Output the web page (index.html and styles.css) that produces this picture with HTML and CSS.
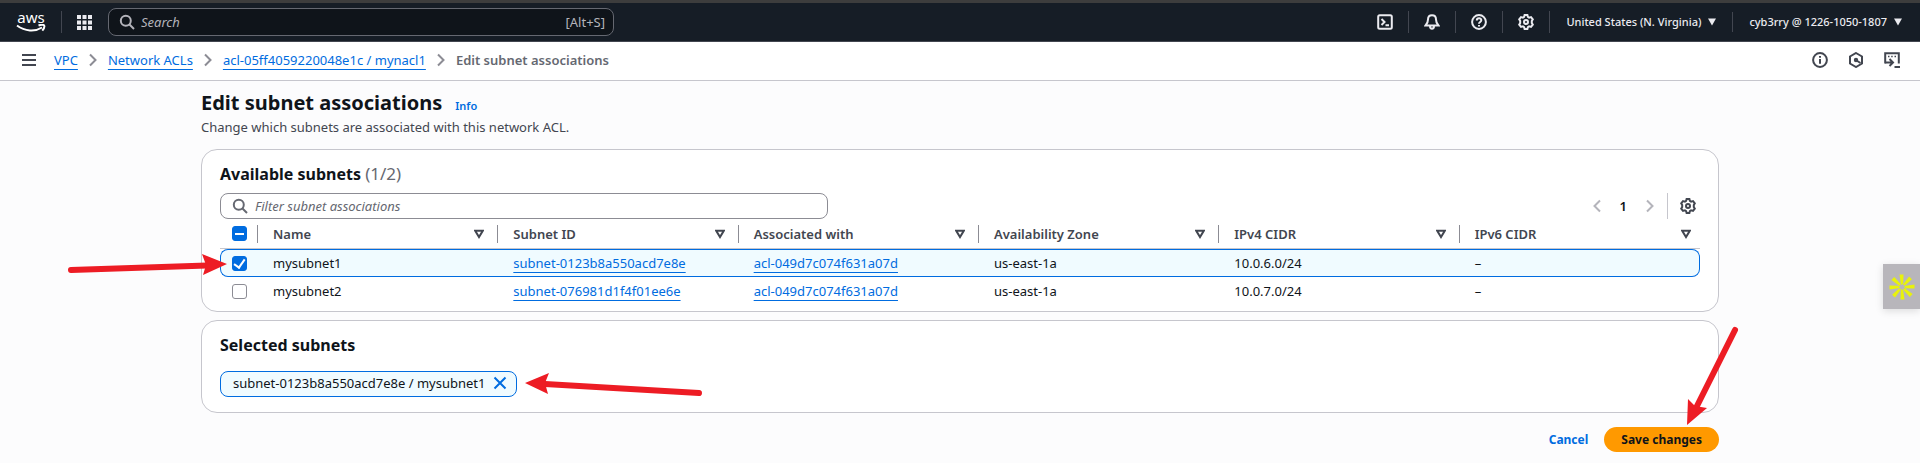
FILE: index.html
```html
<!DOCTYPE html>
<html lang="en">
<head>
<meta charset="utf-8">
<meta name="viewport" content="width=device-width, initial-scale=1">
<title>Edit subnet associations</title>
<link rel="stylesheet" href="styles.css">
</head>
<body>
<svg class="defs" aria-hidden="true">
  <symbol id="search" viewBox="0 0 16 16"><circle cx="6.8" cy="6.8" r="5"/><path d="M10.5 10.5 15 15"/></symbol>
  <symbol id="gear" viewBox="0 0 16 16"><path d="M6.6 1h2.8l.5 1.9 1.2.7 1.9-.5 1.8 2.2-1 1.8v1.8l1 1.8-1.8 2.2-1.9-.5-1.2.7L9.400 15H6.600l-.5-1.900-1.200-.7-1.900.5-1.800-2.200 1-1.800V7.100l-1-1.800L3 3.100l1.900.5 1.200-.7z"/><circle cx="8" cy="8" r="2"/></symbol>
  <symbol id="chevron" viewBox="0 0 16 16"><path d="m5 2.500 5.500 5.500L5 13.500"/></symbol>
  <symbol id="sort" viewBox="0 0 10 10"><path d="M1.200 1.800h7.600L5 8z"/></symbol>
  <symbol id="caret" viewBox="0 0 8 8"><path d="M0 .5h8L4 7.500z"/></symbol>
</svg>

<header class="topbar">
  <a class="logo" href="#" aria-label="AWS home"><span class="logo-text">aws</span>
    <svg class="smile" viewBox="0 0 30 9"><path d="M1 1.500c8 6 18 6.500 25 2"/><path d="M22.500 1.500c2-.8 4.500-1 5.500-.3.700 1-.3 3.800-1.700 5.500"/></svg>
  </a>
  <button class="apps" aria-label="Services">
    <svg viewBox="0 0 15 15"><path d="M0 0h4v4H0zM5.500 0h4v4h-4zM11 0h4v4h-4zM0 5.500h4v4H0zM5.500 5.500h4v4h-4zM11 5.500h4v4h-4zM0 11h4v4H0zM5.500 11h4v4h-4zM11 11h4v4h-4z"/></svg>
  </button>
  <label class="search">
    <svg class="icon"><use href="#search"/></svg>
    <input type="search" placeholder="Search" aria-label="Search">
    <span class="hint">[Alt+S]</span>
  </label>
  <nav class="tools" aria-label="Tools">
    <button class="tool" aria-label="CloudShell"><svg class="icon" viewBox="0 0 16 16"><rect x="1.200" y="1.200" width="13.600" height="13.600" rx="1.500"/><path d="m4.500 5 3 3-3 3M8.500 11.300h3.500"/></svg></button>
    <button class="tool" aria-label="Notifications"><svg class="icon" viewBox="0 0 16 16"><path d="M8 1.200C5.300 1.200 4 3 4 5.500c0 3-1 4-2.500 6h13C13 9.500 12 8.500 12 5.500c0-2.500-1.300-4.300-4-4.300zM6 12c0 3.700 4 3.700 4 0"/></svg></button>
    <button class="tool" aria-label="Support"><svg class="icon" viewBox="0 0 16 16"><circle cx="8" cy="8" r="6.900"/><path d="M5.800 6.500C5.800 3.500 10.300 3.600 10.300 6.300 10.300 8 8 8 8 9.800M8 11v1.600"/></svg></button>
    <button class="tool" aria-label="Settings"><svg class="icon"><use href="#gear"/></svg></button>
    <button class="menu region">United States (N. Virginia) <svg class="caret"><use href="#caret"/></svg></button>
    <button class="menu account">cyb3rry @ 1226-1050-1807 <svg class="caret"><use href="#caret"/></svg></button>
  </nav>
</header>

<div class="crumbbar">
  <button class="burger" aria-label="Open navigation"><svg viewBox="0 0 14 12"><path d="M0 1h14M0 6h14M0 11h14"/></svg></button>
  <nav class="crumbs" aria-label="Breadcrumb">
    <a class="link" href="#">VPC</a>
    <svg class="icon sep"><use href="#chevron"/></svg>
    <a class="link" href="#">Network ACLs</a>
    <svg class="icon sep"><use href="#chevron"/></svg>
    <a class="link" href="#">acl-05ff4059220048e1c / mynacl1</a>
    <svg class="icon sep"><use href="#chevron"/></svg>
    <span class="here">Edit subnet associations</span>
  </nav>
  <div class="panels">
    <button aria-label="Info"><svg class="icon" viewBox="0 0 16 16"><circle cx="8" cy="8" r="6.900"/><path d="M8 7v4.800M8 4v1.800"/></svg></button>
    <button aria-label="Resources"><svg class="icon" viewBox="0 0 16 16"><path d="m8 1 6 3.500v7L8 15l-6-3.500v-7z"/><circle cx="8" cy="8" r="1.200" fill="currentColor"/><path d="m8.500 8.500 4 2.500"/></svg></button>
    <button aria-label="Console"><svg class="icon" viewBox="0 0 16 16"><path d="M1.200 11.500V1.200h13.600V11.500"/><path stroke-width="1.500" d="M4 4.500h1.500M7.200 4.500h1.500M10.500 4.500H12"/><path d="M1.200 10.500h7M5.500 7l3.500 3.500L5.500 14M10.500 15h5.500"/></svg></button>
  </div>
</div>

<main class="page">
  <div class="heading">
    <h1>Edit subnet associations</h1>
    <a class="info" href="#">Info</a>
  </div>
  <p class="intro">Change which subnets are associated with this network ACL.</p>

  <section class="card">
    <h2>Available subnets <span class="count">(1/2)</span></h2>
    <div class="toolbar">
      <label class="filter">
        <svg class="icon"><use href="#search"/></svg>
        <input type="search" placeholder="Filter subnet associations" aria-label="Filter subnet associations">
      </label>
      <div class="pager">
        <button aria-label="Previous page" disabled><svg class="icon prev"><use href="#chevron"/></svg></button>
        <button class="current">1</button>
        <button aria-label="Next page" disabled><svg class="icon"><use href="#chevron"/></svg></button>
        <button class="prefs" aria-label="Preferences"><svg class="icon"><use href="#gear"/></svg></button>
      </div>
    </div>
    <table class="grid">
      <thead>
        <tr>
          <th class="pick"><input class="box mixed" type="checkbox" aria-label="Select all"></th>
          <th><div class="head">Name <svg class="sort"><use href="#sort"/></svg></div></th>
          <th><div class="head">Subnet ID <svg class="sort"><use href="#sort"/></svg></div></th>
          <th><div class="head">Associated with <svg class="sort"><use href="#sort"/></svg></div></th>
          <th><div class="head">Availability Zone <svg class="sort"><use href="#sort"/></svg></div></th>
          <th><div class="head">IPv4 CIDR <svg class="sort"><use href="#sort"/></svg></div></th>
          <th><div class="head last">IPv6 CIDR <svg class="sort"><use href="#sort"/></svg></div></th>
        </tr>
      </thead>
      <tbody>
        <tr class="selected">
          <td class="pick"><input class="box" type="checkbox" aria-label="mysubnet1" checked>
            <svg class="arrow arrow-row" viewBox="0 0 160 24"><path class="shaft" d="M4 18 140 13.500"/><path d="M160 12 135 2l4 11-3 10z"/></svg></td>
          <td>mysubnet1</td>
          <td><a class="link" href="#">subnet-0123b8a550acd7e8e</a></td>
          <td><a class="link" href="#">acl-049d7c074f631a07d</a></td>
          <td>us-east-1a</td>
          <td>10.0.6.0/24</td>
          <td>–</td>
        </tr>
        <tr>
          <td class="pick"><input class="box" type="checkbox" aria-label="mysubnet2"></td>
          <td>mysubnet2</td>
          <td><a class="link" href="#">subnet-076981d1f4f01ee6e</a></td>
          <td><a class="link" href="#">acl-049d7c074f631a07d</a></td>
          <td>us-east-1a</td>
          <td>10.0.7.0/24</td>
          <td>–</td>
        </tr>
      </tbody>
    </table>
  </section>

  <section class="card chosen">
    <h2>Selected subnets</h2>
    <div class="chip">subnet-0123b8a550acd7e8e / mysubnet1
      <button aria-label="Remove mysubnet1"><svg class="icon" viewBox="0 0 16 16"><path d="m2.500 2.500 11 11M13.500 2.500l-11 11"/></svg></button>
      <svg class="arrow arrow-chip" viewBox="0 0 178 26"><path class="shaft" d="M20 11 174 20"/><path d="M0 10 24 0l-4 10 3 11z"/></svg>
    </div>
  </section>

  <div class="actions">
    <button class="cancel">Cancel</button>
    <button class="save">Save changes
      <svg class="arrow arrow-save" viewBox="0 0 52 100"><path class="shaft" d="M48 4 9 82"/><path d="m0 99 1-26 7 7 12 2z"/></svg>
    </button>
  </div>
</main>

<button class="widget" aria-label="Open assistant">
  <svg viewBox="-13 -13 26 26"><g id="ray"><path d="M-2.500-12.500h4L1.200-3.500-1-2z"/></g><use href="#ray" transform="rotate(45)"/><use href="#ray" transform="rotate(90)"/><use href="#ray" transform="rotate(135)"/><use href="#ray" transform="rotate(180)"/><use href="#ray" transform="rotate(225)"/><use href="#ray" transform="rotate(270)"/><use href="#ray" transform="rotate(315)"/></svg>
</button>
</body>
</html>
```
FILE: styles.css
```css
* { box-sizing: border-box; }

body {
  margin: 0;
  background: #fcfcfd;
  color: #0f141a;
  font: 13px/20px "Noto Sans", "Open Sans", sans-serif;
}

button, input { font: inherit; color: inherit; }

button {
  display: flex;
  align-items: center;
  padding: 0;
  border: 0;
  background: none;
  cursor: pointer;
}

.defs { position: absolute; width: 0; height: 0; }

.icon {
  flex: none;
  width: 16px;
  height: 16px;
  fill: none;
  stroke: currentColor;
  stroke-width: 2;
}

.link {
  color: #006ce0;
  text-decoration: underline;
  text-underline-offset: 4px;
}

/* Top bar */
.topbar {
  display: flex;
  align-items: center;
  height: 42px;
  padding: 3px 18px 0 16px;
  border-bottom: 1px solid #424650;
  background: linear-gradient(#3d3d3d 3px, #161d26 3px);
  color: #ebebf0;
}

.logo {
  display: flex;
  flex-direction: column;
  align-items: center;
  width: 30px;
  color: #fff;
  text-decoration: none;
}

.logo-text { font-size: 15px; line-height: 13px; }

.smile {
  width: 30px;
  height: 9px;
  fill: none;
  stroke: currentColor;
  stroke-width: 2;
}

.apps {
  height: 22px;
  margin-left: 15px;
  padding: 0 16px 0 15px;
  border-left: 1px solid #424650;
}

.apps svg { width: 15px; height: 15px; fill: currentColor; }

.search, .filter {
  display: flex;
  align-items: center;
  border-radius: 8px;
}

.search {
  gap: 6px;
  width: 506px;
  height: 28px;
  padding: 0 8px 0 10px;
  border: 1px solid #656871;
  background: #0f141a;
  color: #b4b4bb;
}

.search input, .filter input {
  flex: 1;
  min-width: 0;
  padding: 0;
  border: 0;
  outline: 0;
  background: none;
}

input::placeholder { color: inherit; font-style: italic; opacity: 1; }

.tools { display: flex; align-items: center; margin-left: auto; }

.tool {
  justify-content: center;
  width: 47px;
  height: 22px;
  border-right: 1px solid #424650;
}

.menu { gap: 7px; height: 20px; font-size: 11px; font-weight: 500; }
.region { padding: 0 16px; border-right: 1px solid #424650; }
.account { padding-left: 16px; }
.caret { width: 8px; height: 8px; fill: currentColor; }

/* Breadcrumb bar */
.crumbbar {
  display: flex;
  align-items: center;
  height: 39px;
  padding: 0 20px 2px 22px;
  border-bottom: 1px solid #c6c6cd;
  background: #fff;
  color: #424650;
}

.burger svg { width: 14px; height: 12px; stroke: currentColor; stroke-width: 2; }
.crumbs { display: flex; align-items: center; gap: 7px; margin-left: 18px; }
.sep { color: #8c8c94; }
.here { color: #656871; font-weight: 600; }
.panels { display: flex; gap: 20px; margin-left: auto; }

/* Page */
.page {
  max-width: 1518px;
  margin: 0 auto;
  padding: 8px 0;
}

.heading { display: flex; align-items: baseline; gap: 13px; }

h1, h2, p { margin: 0; }

h1 { font-size: 20px; line-height: 28px; font-weight: 700; }

.info { color: #006ce0; font-size: 11px; font-weight: 600; text-decoration: none; }

.intro { color: #424650; }

.card {
  margin-top: 12px;
  padding: 12px 18px 6px;
  border: 1px solid #c6c6cd;
  border-radius: 16px;
  background: #fff;
}

h2 { font-size: 16px; line-height: 24px; font-weight: 700; }

.count { color: #656871; font-size: 17px; font-weight: 400; }

.toolbar { display: flex; align-items: center; margin-top: 7px; }

.filter {
  gap: 7px;
  width: 608px;
  height: 26px;
  padding: 0 10px 0 11px;
  border: 1px solid #8c8c94;
  color: #656871;
}

.pager {
  display: flex;
  align-items: center;
  margin-left: auto;
  padding-right: 4px;
  color: #0f141a;
  font-weight: 600;
}

.pager button:disabled { color: #b4b4bb; }
.current { padding: 0 15px; }
.prev { transform: rotate(180deg); }

.prefs {
  height: 26px;
  margin-left: 9px;
  padding-left: 12px;
  border-left: 1px solid #c6c6cd;
  color: #424650;
}

/* Table */
.grid {
  width: 100%;
  border-spacing: 0;
  table-layout: fixed;
}

.grid th, .grid td { padding: 0 0 0 15px; text-align: left; }

.grid th {
  height: 30px;
  border-bottom: 1px solid #c6c6cd;
  color: #424650;
  font-weight: 600;
}

.grid td { height: 28px; }

.grid .pick { width: 38px; padding-left: 12px; }

.head {
  display: flex;
  align-items: center;
  justify-content: space-between;
  height: 18px;
  padding-right: 14px;
  border-left: 1px solid #8c8c94;
  margin-left: -16px;
  padding-left: 15px;
}

.last { padding-right: 9px; }

.sort { width: 10px; height: 10px; fill: none; stroke: currentColor; stroke-width: 2; }

.selected td {
  border: solid #006ce0;
  border-width: 1px 0;
  background: #f0fbff;
}

.selected td:first-child { border-left-width: 1px; border-radius: 8px 0 0 8px; }
.selected td:last-child { border-right-width: 1px; border-radius: 0 8px 8px 0; }

.grid .selected .pick { position: relative; padding-left: 11px; }

.box {
  display: grid;
  place-items: center;
  width: 15px;
  height: 15px;
  margin: 0;
  border: 1px solid #8c8c94;
  border-radius: 3px;
  background: #fff;
  appearance: none;
}

.box:checked, .mixed { border-color: #006ce0; background: #006ce0; }

.mixed::after { content: ""; width: 9px; height: 2px; background: #fff; }

.box:checked::after {
  content: "";
  width: 5px;
  height: 9px;
  margin-bottom: 2px;
  border: solid #fff;
  border-width: 0 2px 2px 0;
  transform: rotate(35deg);
}

/* Selected subnets */
.chosen { margin-top: 8px; padding-bottom: 15px; }

.chip {
  position: relative;
  display: inline-flex;
  align-items: center;
  gap: 7px;
  height: 26px;
  margin-top: 14px;
  padding: 0 8px 2px 12px;
  border: 1px solid #006ce0;
  border-radius: 8px;
  background: #f0fbff;
  vertical-align: top;
}

.chip button { color: #006ce0; }

/* Actions */
.actions {
  display: flex;
  justify-content: flex-end;
  gap: 16px;
  margin-top: 14px;
  font-size: 12px;
  font-weight: 700;
}

.cancel { color: #006ce0; }

.save {
  position: relative;
  height: 25px;
  padding: 0 17px;
  border-radius: 13px;
  background: #f90;
}

/* Pointers drawn over the page */
.arrow { position: absolute; fill: #ed1c24; pointer-events: none; }
.shaft { stroke: #ed1c24; stroke-width: 6; stroke-linecap: round; }
.arrow-row { right: 31px; top: 2px; width: 160px; height: 24px; }
.arrow-chip { left: calc(100% + 9px); top: 1px; width: 178px; height: 26px; }
.arrow-save { left: 83px; bottom: 26px; width: 52px; height: 100px; }

.widget {
  position: fixed;
  right: 0;
  top: 264px;
  justify-content: center;
  width: 37px;
  height: 45px;
  background: #b8b6bb;
  box-shadow: 0 2px 8px #0002;
}

.widget svg { width: 26px; height: 26px; fill: #e8f20c; }
```
